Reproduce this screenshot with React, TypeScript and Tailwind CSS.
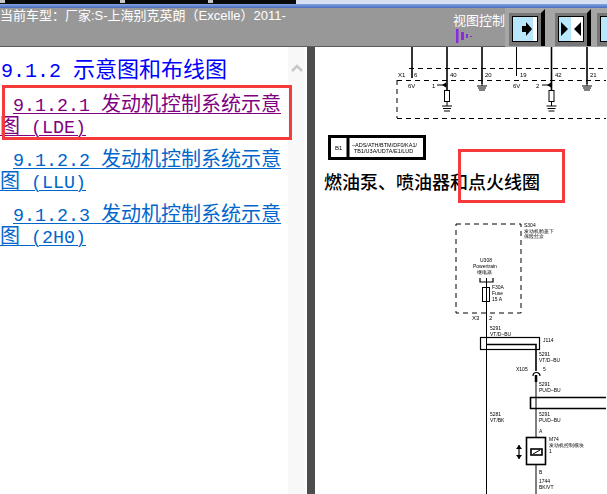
const SANS = '"Noto Sans CJK SC","Liberation Sans",sans-serif';
const MONO = '"Liberation Mono",monospace';

function Latin({ children, size = "text-[18.33px]" }: { children: React.ReactNode; size?: string }) {
  return <span className={`${size} leading-[10px]`} style={{ fontFamily: MONO }}>{children}</span>;
}

function Btn({ kind, outer }: { kind: number; outer: string }) {
  return (
    <div className={`${outer} h-[39px] bg-[#a6a6a6] pl-[4px] pt-[5px] shrink-0`}>
      <div className="w-[36px] h-[33px] bg-[#777777] border-r-[4px] border-r-black pl-[4px] pt-[4px] relative">
        <svg width="4" height="4" viewBox="0 0 4 4" className="absolute -top-[4px] -right-[4px] block">
          <path d="M0 4L4 0V4z" fill="#000" />
        </svg>
        <svg width="24" height="24" viewBox="0 0 24 24" className="bg-[#b8e6fb] outline outline-1 outline-black block">
          {kind === 0 && (<><rect x="20" y="0" width="4" height="24" fill="#fff" /><path d="M9 9h4V5l6 7-6 7v-4H9z" fill="#000" /></>)}
          {kind === 1 && (<><rect x="12" y="0" width="12" height="24" fill="#fff" /><path d="M2 5l7 7-7 7zM22 5l-7 7 7 7z" fill="#000" /></>)}
        </svg>
      </div>
    </div>
  );
}

function Diagram() {
  const t = (x: number, y: number, s: string, size = 6) => (
    <text x={x} y={y} fontSize={size} fontFamily="Liberation Sans" fill="#000" key={x + "-" + y + s}>{s}</text>
  );
  return (
    <svg width="291" height="447" viewBox="316 47 291 447" className="block blur-[0.3px]">
      <g stroke="#000" fill="none">
        <path d="M413 47V78M448 47V90M483 47V84M552.500 47V90M588 47V84" strokeWidth="1.600" />
        <path d="M517.500 47V76" strokeWidth="1" />
        <path d="M410 68.500H607" strokeDasharray="5 4" strokeWidth="1" />
        <path d="M398 80.500H607M398 118.500H607M398 80V118" strokeDasharray="5 4" strokeWidth="1" />
        <rect x="445.500" y="90.500" width="5" height="11" strokeWidth="1" />
        <rect x="550" y="90.500" width="5" height="11" strokeWidth="1" />
        <path d="M448 101V106M443 106H453M444 108.500H452M445 111H451M552.500 101V106M547.500 106H557.500M548.500 108.500H556.500M549.500 111H555.500" />
        <path d="M483 84V86M478 86H488M479 88H487M480 90H486M588 84V86M583 86H593M584 88H592M585 90H591" />
        <path d="M438 85H448M543 85H553" />
        <rect x="330.500" y="136.500" width="95" height="22" strokeWidth="3" />
        <path d="M349 136V160" strokeWidth="3" />
        <rect x="457" y="224" width="65" height="89" strokeDasharray="5 4" />
        <path d="M481 278V282H494V278" strokeWidth="1.200" />
        <rect x="483.500" y="287.500" width="7" height="14" />
        <path d="M487.500 278V494" strokeWidth="1" />
        <rect x="481.500" y="337.500" width="59" height="12" strokeWidth="1.200" />
        <path d="M487 344.500H537V371" strokeWidth="1.600" />
        <path d="M537 382V494" strokeWidth="1" />
        <path d="M534 376a3.500 3.500 0 0 1 7 0" strokeWidth="1.200" />
        <path d="M537 375V382" strokeWidth="2.500" />
        <path d="M607 397.500H531.500V408.500H607" strokeWidth="1.600" />
        <rect x="527.500" y="437.500" width="19" height="27" fill="#fff" strokeWidth="1.600" />
        <rect x="532" y="449" width="11" height="6" strokeWidth="1.600" />
        <path d="M534 454L541 450" strokeWidth="1" />
        <path d="M520 445V459" strokeWidth="1.200" />
      </g>
      <path d="M443 85l4-2.500V87.500zM548 85l4-2.500V87.500z" fill="#000" />
      <path d="M517 449h6l-3-4zM517 455h6l-3 4z" fill="#000" />
      <g>
        {t(399, 77, "X1")}{t(415, 77, "6")}{t(451, 77, "40")}{t(486, 77, "20")}{t(521, 77, "19")}{t(556, 77, "42")}{t(591, 77, "21")}
        {t(409, 88, "6V")}{t(433, 88, "1")}{t(514, 88, "6V")}{t(537, 88, "2")}
        <text x="353" y="147" fontSize="5.500" fontFamily="Liberation Sans" fill="#000">–ADS/ATH/BTM/DF0/KA1/</text>
        <text x="355" y="153" fontSize="5.500" fontFamily="Liberation Sans" fill="#000">TB1/U3A/UD7A/E1/LUD</text>
        {t(336, 150, "B1")}
        {t(525, 227, "S304", 5)}{t(525, 233, "发动机舱盖下", 5)}{t(525, 238, "保险丝盒", 5)}
        {t(481, 262, "U308", 5)}{t(474, 268, "Powertrain", 5)}{t(478, 274, "继电器", 5)}
        {t(493, 289, "F30A", 5)}{t(493, 295, "Fuse", 5)}{t(493, 301, "15 A", 5)}
        {t(473, 320, "X3")}{t(490, 320, "2")}
        {t(491, 330, "5291", 5)}{t(491, 336, "VT/D–BU", 5)}{t(544, 342, "J114", 5)}
        {t(540, 356, "5291", 5)}{t(540, 362, "VT/D–BU", 5)}
        {t(517, 371, "X105", 5)}{t(544, 371, "5", 5)}
        {t(540, 386, "5291", 5)}{t(540, 392, "PU/D–BU", 5)}
        {t(540, 416, "5291", 5)}{t(540, 422, "PU/D–BU", 5)}
        {t(540, 433, "A", 5)}{t(540, 474, "B", 5)}
        {t(491, 416, "5281", 5)}{t(491, 422, "VT/BK", 5)}
        {t(550, 441, "M74", 5)}{t(550, 447, "发动机控制模块", 5)}{t(550, 453, "1", 5)}
        {t(540, 483, "1744", 5)}{t(540, 489, "BK/VT", 5)}
      </g>
    </svg>
  );
}

function Entry({ num, tail, color, top }: { num: string; tail: string; color: string; top: string }) {
  return (
    <a className={`absolute left-0 ${top} ${color} w-[288px] text-[20px] leading-[22px] underline underline-offset-[2px] decoration-1 indent-[13px]`}>
      <Latin>{num + " "}</Latin>发动机控制系统示意图<Latin>{" (" + tail + ")"}</Latin>
    </a>
  );
}

export default function App() {
  return (
    <div className="w-[607px] h-[494px] overflow-hidden flex flex-col bg-white relative" style={{ fontFamily: SANS }}>
      <div className="h-[4px] shrink-0 flex bg-[#d8e0f4]">
        <div className="w-[296px] bg-[#0a0a0a] flex">
          <div className="w-[5px] h-[3px] bg-[#c8c8c8]" />
          <div className="ml-[115px] w-[5px] h-[3px] bg-[#c8c8c8]" />
          <div className="ml-[83px] w-[5px] h-[3px] bg-[#c8c8c8]" />
        </div>
      </div>
      <div className="h-[4px] shrink-0 bg-gradient-to-b from-[#86a4e0] to-[#4a6cc0]" />
      <div className="h-[39px] bg-[#989898] border-b border-[#5c5c5c] shrink-0 flex">
        <div className="w-[453px] shrink-0 overflow-hidden text-[13px] leading-[18px] text-white whitespace-nowrap -mt-[1px]" style={{ fontFamily: '"Liberation Sans","Noto Sans CJK SC",sans-serif' }}>
          当前车型：厂家:S-上海别克英朗（Excelle）2011-
        </div>
        <div className="w-[52px] shrink-0 pt-[4px] text-[13px] leading-[15px] text-white whitespace-nowrap">
          视图控制
          <svg width="16" height="14" viewBox="0 0 16 14" className="block ml-[3px] mt-[2px]">
            <path d="M0 0h2.500v14H0zM5 3h3v8H5zM10 5h2v4h-2zM14 7h2v1h-2z" fill="#8a2be2" />
          </svg>
        </div>
        <Btn kind={0} outer="w-[46px]" />
        <Btn kind={1} outer="w-[42px]" />
        <Btn kind={0} outer="w-[14px]" />
      </div>
      <div className="flex-1 flex min-h-0">
        <div className="w-[288px] relative shrink-0">
          <div className="absolute left-[1px] top-[8px] text-[22px] leading-[24px] text-[#0000ff] whitespace-nowrap">
            <Latin size="text-[20px]">9.1.2 </Latin>示意图和布线图
          </div>
          <Entry num="9.1.2.1" tail="LDE" color="text-[#800080]" top="top-[45px]" />
          <Entry num="9.1.2.2" tail="LLU" color="text-[#0066cc]" top="top-[100px]" />
          <Entry num="9.1.2.3" tail="2H0" color="text-[#0066cc]" top="top-[155px]" />
        </div>
        <div className="w-[17px] bg-[#f8f8f8] shrink-0 flex justify-center items-start pt-[17px]">
          <svg width="12" height="8" viewBox="0 0 12 8" className="block"><path d="M1 7l5-5 5 5" stroke="#c8c8c8" strokeWidth="2.500" fill="none" /></svg>
        </div>
        <div className="w-[2px] shrink-0" />
        <div className="w-[8px] bg-[#4d4d4d] shrink-0" />
        <div className="flex-1 relative">
          <Diagram />
          <div className="absolute left-[9px] top-[123px] text-[18px] leading-[22px] text-black whitespace-nowrap font-medium">燃油泵、喷油器和点火线圈</div>
        </div>
      </div>
      <div className="absolute left-[2px] top-[85px] w-[290px] h-[55px] border-[3px] border-[#f43a3a]" />
      <div className="absolute left-[458px] top-[149px] w-[107px] h-[54px] border-[3px] border-[#f43a3a]" />
    </div>
  );
}
